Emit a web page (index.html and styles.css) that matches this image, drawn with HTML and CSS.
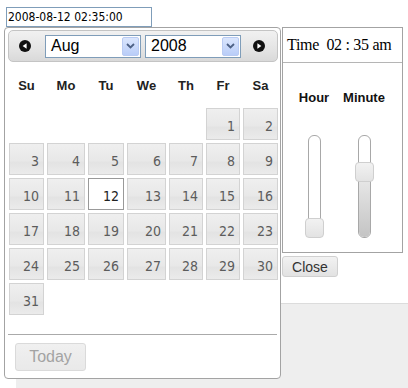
FILE: index.html
```html
<!DOCTYPE html>
<html lang="en">
<head>
    <meta charset="UTF-8">
    <title>Date Time Picker</title>
    <link rel="stylesheet" href="styles.css">
</head>
<body>
<div class="page">
    <input type="text" class="date-input" value="2008-08-12 02:35:00">
    <div class="page-box"></div>

    <div class="picker">
        <div class="calendar">
            <div class="cal-header">
                <span class="nav-btn prev"><svg width="12" height="12" viewBox="0 0 12 12"><circle cx="6" cy="6" r="6" fill="#111"/><path d="M7.6 3.2 L3.6 6 L7.6 8.8 Z" fill="#fff"/></svg></span>
                <div class="select month">
                    <span class="select-text">Aug</span>
                    <span class="select-arrow"><svg width="9" height="6" viewBox="0 0 9 6"><path d="M1 1 L4.5 4.5 L8 1" fill="none" stroke="#4d6185" stroke-width="1.8"/></svg></span>
                </div>
                <div class="select year">
                    <span class="select-text">2008</span>
                    <span class="select-arrow"><svg width="9" height="6" viewBox="0 0 9 6"><path d="M1 1 L4.5 4.5 L8 1" fill="none" stroke="#4d6185" stroke-width="1.8"/></svg></span>
                </div>
                <span class="nav-btn next"><svg width="12" height="12" viewBox="0 0 12 12"><circle cx="6" cy="6" r="6" fill="#111"/><path d="M4.4 3.2 L8.4 6 L4.4 8.8 Z" fill="#fff"/></svg></span>
            </div>

            <div class="days">
                <div class="wd">Su</div><div class="wd">Mo</div><div class="wd">Tu</div><div class="wd">We</div><div class="wd">Th</div><div class="wd">Fr</div><div class="wd">Sa</div>

                <div class="blank"></div><div class="blank"></div><div class="blank"></div><div class="blank"></div><div class="blank"></div>
                <div class="day">1</div><div class="day">2</div>

                <div class="day">3</div><div class="day">4</div><div class="day">5</div><div class="day">6</div><div class="day">7</div><div class="day">8</div><div class="day">9</div>
                <div class="day">10</div><div class="day">11</div><div class="day today">12</div><div class="day">13</div><div class="day">14</div><div class="day">15</div><div class="day">16</div>
                <div class="day">17</div><div class="day">18</div><div class="day">19</div><div class="day">20</div><div class="day">21</div><div class="day">22</div><div class="day">23</div>
                <div class="day">24</div><div class="day">25</div><div class="day">26</div><div class="day">27</div><div class="day">28</div><div class="day">29</div><div class="day">30</div>
                <div class="day">31</div>
            </div>

            <div class="cal-footer">
                <button class="today-btn" disabled>Today</button>
            </div>
        </div>

        <div class="time-col">
            <div class="time-panel">
                <div class="time-title">Time&nbsp; 02 : 35 am</div>
                <div class="time-body">
                    <div class="slider-col hour">
                        <div class="slider-label">Hour</div>
                        <div class="track">
                            <span class="handle" style="bottom: -1px;"></span>
                        </div>
                    </div>
                    <div class="slider-col minute">
                        <div class="slider-label">Minute</div>
                        <div class="track">
                            <span class="range" style="height: 56px;"></span>
                            <span class="handle" style="bottom: 55px;"></span>
                        </div>
                    </div>
                </div>
            </div>
            <button class="close-btn">Close</button>
        </div>
    </div>
</div>
</body>
</html>
```

FILE: styles.css
```css
body {
    margin: 0;
    padding: 0;
    background-color: #fff;
    font-family: "Liberation Sans", Arial, sans-serif;
    overflow: hidden;
}
.page {
    position: relative;
    padding-top: 7px;
    padding-left: 6px;
    height: 388px;
    box-sizing: border-box;
    overflow: hidden;
}
.date-input {
    display: block;
    box-sizing: border-box;
    width: 146px;
    height: 20px;
    margin: 0;
    padding: 0 0 0 1px;
    border: 1px solid #7f9db9;
    font-family: "DejaVu Sans Condensed", "DejaVu Sans", sans-serif;
    font-size: 12px;
    color: #000;
    outline: none;
}
.page-box {
    margin-top: 276px;
    margin-left: 10px;
    height: 84px;
    background-color: #eeeeee;
    border-top: 1px solid #dcdcdc;
}

/* popup over the page */
.picker {
    position: absolute;
    top: 27px;
    left: 4px;
    display: flex;
    align-items: flex-start;
}
.calendar {
    width: 270px;
    border: 1px solid #a3a3a3;
    border-radius: 4px;
    padding: 2px 2px 7px 3px;
    background-color: #fff;
}
.cal-header {
    box-sizing: border-box;
    width: 270px;
    height: 32px;
    display: flex;
    align-items: center;
    padding-left: 10px;
    border: 1px solid #c4c4c4;
    border-radius: 5px;
    background: linear-gradient(#f1f1f1, #e4e4e4 60%, #d9d9d9);
}
.nav-btn {
    display: block;
    width: 12px;
    height: 12px;
}
.nav-btn svg {
    display: block;
}
.prev {
    margin-right: 14px;
}
.next {
    margin-left: 12px;
}
.select {
    box-sizing: border-box;
    width: 96px;
    height: 23px;
    display: flex;
    align-items: center;
    justify-content: space-between;
    border: 1px solid #7f9db9;
    background-color: #fff;
    padding: 1px;
}
.select.year {
    margin-left: 4px;
}
.select-text {
    padding-left: 4px;
    font-size: 16px;
    color: #000;
}
.select-arrow {
    box-sizing: border-box;
    width: 17px;
    height: 19px;
    display: flex;
    align-items: center;
    justify-content: center;
    border: 1px solid #b9cbf3;
    border-radius: 2px;
    background: linear-gradient(#dbe6fd, #b9cdf8);
}

.days {
    display: grid;
    grid-template-columns: 35px 38px 36px 39px 34px 34px 35px;
    grid-template-rows: 43px;
    grid-auto-rows: 32px;
    column-gap: 3px;
    row-gap: 3px;
    margin-left: 1px;
    width: 269px;
}
.wd {
    display: flex;
    align-items: center;
    justify-content: center;
    padding-top: 3px;
    font-size: 13px;
    font-weight: bold;
    color: #222;
}
.day {
    box-sizing: border-box;
    display: flex;
    align-items: center;
    justify-content: flex-end;
    padding: 3px 4px 0 0;
    border: 1px solid #d3d3d3;
    background: linear-gradient(#efefef, #e8e8e8 55%, #e3e3e3 62%, #ebebeb);
    font-family: "DejaVu Sans Condensed", "DejaVu Sans", sans-serif;
    font-size: 14px;
    color: #5c5c5c;
}
.day.today {
    background: #fff;
    border-color: #999;
    color: #222;
}
.cal-footer {
    margin-top: 19px;
    border-top: 1px solid #aaa;
    width: 269px;
    padding-top: 8px;
}
.today-btn {
    box-sizing: border-box;
    display: block;
    margin: 0 0 0 7px;
    width: 71px;
    height: 28px;
    padding: 0;
    border: 1px solid #dadada;
    border-radius: 3px;
    background: linear-gradient(#f0f0f0, #e9e9e9);
    font-family: "Liberation Sans", Arial, sans-serif;
    font-size: 16px;
    color: #a3a3a3;
}

/* time panel */
.time-col {
    margin-left: 1px;
}
.time-panel {
    box-sizing: border-box;
    width: 121px;
    height: 226px;
    border: 1px solid #a3a3a3;
    background-color: #fff;
}
.time-title {
    height: 34px;
    border-bottom: 1px solid #b5b5b5;
    display: flex;
    align-items: center;
    padding-left: 4px;
    font-family: "Liberation Serif", "Times New Roman", serif;
    font-size: 16px;
    color: #000;
    letter-spacing: -0.3px;
}
.time-body {
    display: flex;
    padding-left: 13px;
    padding-top: 27px;
    column-gap: 10px;
}
.slider-col {
    display: flex;
    flex-direction: column;
    align-items: center;
}
.slider-col.hour {
    width: 36px;
}
.slider-col.minute {
    width: 44px;
}
.slider-label {
    font-size: 13px;
    font-weight: bold;
    line-height: 16px;
    color: #111;
}
.track {
    position: relative;
    box-sizing: border-box;
    margin-top: 29px;
    width: 13px;
    height: 103px;
    border: 1px solid #a8a8a8;
    border-radius: 6px;
    background-color: #fff;
}
.range {
    position: absolute;
    left: 0;
    right: 0;
    bottom: 0;
    border-radius: 0 0 5px 5px;
    background: linear-gradient(#e6e6e6, #c4c4c4);
}
.handle {
    position: absolute;
    left: -4px;
    box-sizing: border-box;
    width: 19px;
    height: 20px;
    border: 1px solid #cfcfcf;
    border-radius: 4px;
    background: linear-gradient(#f2f2f2, #e3e3e3);
}
.close-btn {
    box-sizing: border-box;
    display: block;
    margin-top: 3px;
    width: 56px;
    height: 21px;
    padding: 0;
    border: 1px solid #d0d0d0;
    border-radius: 3px;
    background: linear-gradient(#f2f2f2, #e2e2e2);
    font-family: "Liberation Sans", Arial, sans-serif;
    font-size: 14px;
    color: #333;
}
```
